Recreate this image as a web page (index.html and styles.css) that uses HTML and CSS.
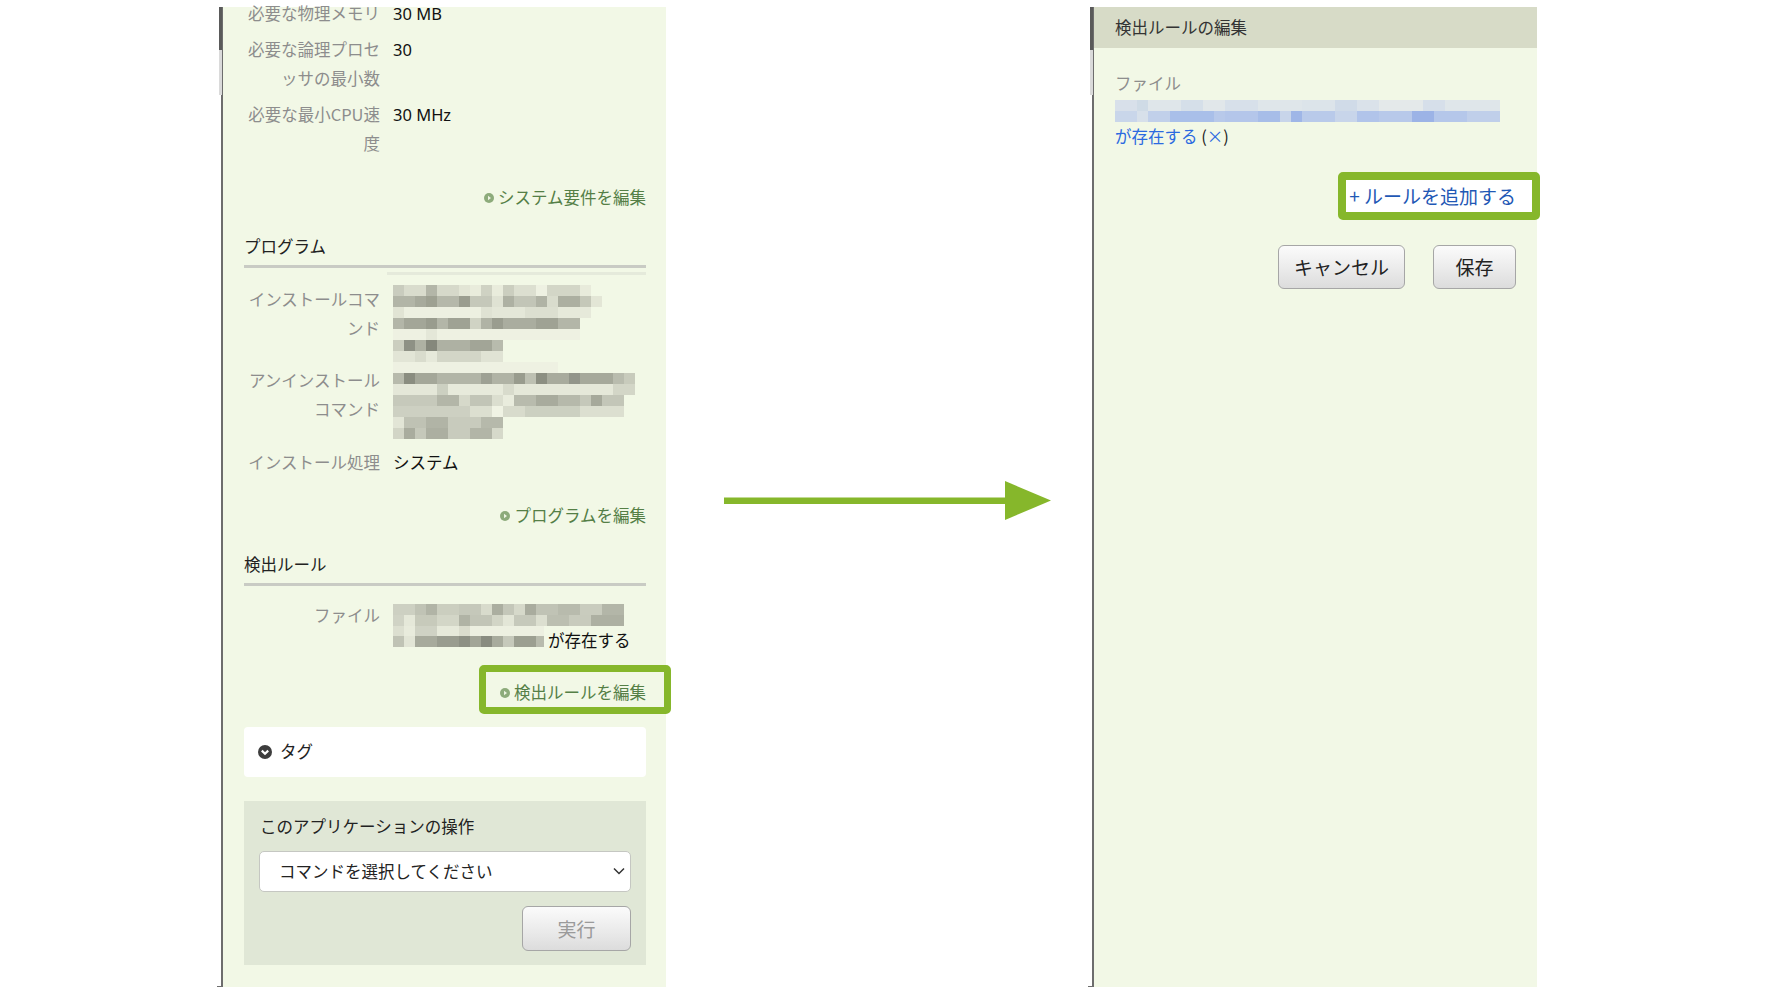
FILE: index.html
```html
<!DOCTYPE html>
<html lang="ja">
<head>
    <meta charset="UTF-8">
    <title>検出ルールの編集</title>
    <link rel="stylesheet" href="styles.css">
</head>
<body>
    <div class="stage">
        <!-- 左: アプリケーション詳細 -->
        <section class="panel">
            <div class="detail-body">
                <dl class="props props-first">
                    <dt>必要な物理メモリ</dt>
                    <dd class="latin">30 MB</dd>
                    <dt>必要な論理プロセッサの最小数</dt>
                    <dd class="latin">30</dd>
                    <dt>必要な最小CPU速度</dt>
                    <dd class="latin">30 MHz</dd>
                </dl>
                <div class="edit-row">
                    <a class="edit-link" href="#"><svg class="go-icon" width="10" height="10" viewBox="0 0 10 10"><circle cx="5" cy="5" r="5" fill="#8dab7b"/><path d="M4 2.8 L7 5 L4 7.2 Z" fill="#eef4e4"/></svg><span>システム要件を編集</span></a>
                </div>

                <h3 class="section-title">プログラム</h3>
                <div class="strip"></div>
                <dl class="props">
                    <dt>インストールコマンド</dt>
                    <dd>
                        <svg class="mosaic mosaic-cmd" width="210" height="77" shape-rendering="crispEdges">
                            <rect x="0" y="0" width="11" height="11" fill="#c9ccbe"/><rect x="11" y="0" width="22" height="11" fill="#d9dccd"/><rect x="33" y="0" width="11" height="11" fill="#b3b6a8"/><rect x="44" y="0" width="22" height="11" fill="#d6d9ca"/><rect x="66" y="0" width="11" height="11" fill="#e2e5d5"/><rect x="77" y="0" width="11" height="11" fill="#e9ecdc"/><rect x="88" y="0" width="11" height="11" fill="#cfd2c3"/><rect x="99" y="0" width="11" height="11" fill="#e9ecdc"/><rect x="110" y="0" width="11" height="11" fill="#cbcebf"/><rect x="121" y="0" width="22" height="11" fill="#dcdfd0"/><rect x="143" y="0" width="11" height="11" fill="#eef1e2"/><rect x="154" y="0" width="33" height="11" fill="#d3d6c7"/><rect x="187" y="0" width="11" height="11" fill="#e8ebdb"/>
                            <rect x="0" y="11" width="22" height="11" fill="#b2b5a7"/><rect x="22" y="11" width="11" height="11" fill="#a7aa9c"/><rect x="33" y="11" width="11" height="11" fill="#9ea192"/><rect x="44" y="11" width="22" height="11" fill="#b5b8aa"/><rect x="66" y="11" width="11" height="11" fill="#9a9d8f"/><rect x="77" y="11" width="22" height="11" fill="#c5c8ba"/><rect x="99" y="11" width="11" height="11" fill="#dfe2d3"/><rect x="110" y="11" width="11" height="11" fill="#aeb1a3"/><rect x="121" y="11" width="22" height="11" fill="#c2c5b7"/><rect x="143" y="11" width="11" height="11" fill="#b0b3a5"/><rect x="154" y="11" width="11" height="11" fill="#d9dccd"/><rect x="165" y="11" width="22" height="11" fill="#acafa1"/><rect x="187" y="11" width="11" height="11" fill="#c5c8b9"/><rect x="198" y="11" width="11" height="11" fill="#e3e6d6"/>
                            <rect x="0" y="22" width="11" height="11" fill="#e1e4d4"/><rect x="11" y="22" width="77" height="11" fill="#edf0e1"/><rect x="88" y="22" width="11" height="11" fill="#dfe2d3"/><rect x="99" y="22" width="33" height="11" fill="#e4e7d8"/><rect x="132" y="22" width="33" height="11" fill="#dcdfd0"/><rect x="165" y="22" width="33" height="11" fill="#e6e9da"/>
                            <rect x="0" y="33" width="11" height="11" fill="#b3b6a8"/><rect x="11" y="33" width="22" height="11" fill="#a3a698"/><rect x="33" y="33" width="11" height="11" fill="#999c8e"/><rect x="44" y="33" width="11" height="11" fill="#b3b6a8"/><rect x="55" y="33" width="22" height="11" fill="#9fa294"/><rect x="77" y="33" width="11" height="11" fill="#d0d3c4"/><rect x="88" y="33" width="11" height="11" fill="#b0b3a5"/><rect x="99" y="33" width="11" height="11" fill="#9a9d8f"/><rect x="110" y="33" width="33" height="11" fill="#aaad9f"/><rect x="143" y="33" width="22" height="11" fill="#9fa294"/><rect x="165" y="33" width="22" height="11" fill="#b3b6a8"/>
                            <rect x="0" y="44" width="187" height="11" fill="#eef1e2"/><rect x="33" y="44" width="11" height="11" fill="#e4e7d8"/>
                            <rect x="0" y="55" width="11" height="11" fill="#cbcebf"/><rect x="11" y="55" width="11" height="11" fill="#8e9185"/><rect x="22" y="55" width="11" height="11" fill="#aeb1a3"/><rect x="33" y="55" width="11" height="11" fill="#85887c"/><rect x="44" y="55" width="33" height="11" fill="#aeb1a3"/><rect x="77" y="55" width="22" height="11" fill="#a2a597"/><rect x="99" y="55" width="11" height="11" fill="#b8bbad"/>
                            <rect x="0" y="66" width="22" height="11" fill="#e2e5d6"/><rect x="22" y="66" width="11" height="11" fill="#d9dccd"/><rect x="33" y="66" width="11" height="11" fill="#e6e9da"/><rect x="44" y="66" width="44" height="11" fill="#d3d6c7"/><rect x="88" y="66" width="22" height="11" fill="#e0e3d4"/>
                        </svg>
                    </dd>
                    <dt>アンインストールコマンド</dt>
                    <dd>
                        <svg class="mosaic mosaic-uninstall" width="242" height="77" shape-rendering="crispEdges">
                            <rect x="0" y="0" width="165" height="11" fill="#eef1e2"/>
                            <rect x="0" y="11" width="11" height="11" fill="#b7baac"/><rect x="11" y="11" width="11" height="11" fill="#8a8d80"/><rect x="22" y="11" width="22" height="11" fill="#a4a799"/><rect x="44" y="11" width="44" height="11" fill="#b2b5a7"/><rect x="88" y="11" width="11" height="11" fill="#9ea194"/><rect x="99" y="11" width="22" height="11" fill="#b0b3a5"/><rect x="121" y="11" width="11" height="11" fill="#999c8e"/><rect x="132" y="11" width="11" height="11" fill="#bdc0b2"/><rect x="143" y="11" width="11" height="11" fill="#8c8f82"/><rect x="154" y="11" width="22" height="11" fill="#a8ab9d"/><rect x="176" y="11" width="11" height="11" fill="#92958a"/><rect x="187" y="11" width="33" height="11" fill="#a6a99b"/><rect x="220" y="11" width="11" height="11" fill="#b9bcae"/><rect x="231" y="11" width="11" height="11" fill="#c8cbbc"/>
                            <rect x="0" y="22" width="44" height="11" fill="#e4e7d8"/><rect x="44" y="22" width="11" height="11" fill="#ccd0c1"/><rect x="55" y="22" width="55" height="11" fill="#e7eadb"/><rect x="110" y="22" width="11" height="11" fill="#d8dbcc"/><rect x="121" y="22" width="99" height="11" fill="#e5e8d9"/><rect x="220" y="22" width="22" height="11" fill="#d3d6c7"/>
                            <rect x="0" y="33" width="44" height="11" fill="#c6c9bb"/><rect x="44" y="33" width="22" height="11" fill="#b3b6a8"/><rect x="66" y="33" width="11" height="11" fill="#d6d9ca"/><rect x="77" y="33" width="22" height="11" fill="#c2c5b7"/><rect x="99" y="33" width="11" height="11" fill="#dbdecf"/><rect x="110" y="33" width="11" height="11" fill="#e9ecdd"/><rect x="121" y="33" width="22" height="11" fill="#b8bbad"/><rect x="143" y="33" width="22" height="11" fill="#a8ab9d"/><rect x="165" y="33" width="22" height="11" fill="#b6b9ab"/><rect x="187" y="33" width="11" height="11" fill="#c5c8ba"/><rect x="198" y="33" width="11" height="11" fill="#a6a99b"/><rect x="209" y="33" width="22" height="11" fill="#c3c6b8"/>
                            <rect x="0" y="44" width="77" height="11" fill="#cdd0c2"/><rect x="77" y="44" width="22" height="11" fill="#dcdfd0"/><rect x="99" y="44" width="11" height="11" fill="#f0f3e4"/><rect x="110" y="44" width="22" height="11" fill="#d8dbcc"/><rect x="132" y="44" width="55" height="11" fill="#ccd0c1"/><rect x="187" y="44" width="44" height="11" fill="#dcdfd0"/>
                            <rect x="0" y="55" width="11" height="11" fill="#e2e5d6"/><rect x="11" y="55" width="22" height="11" fill="#bfc2b4"/><rect x="33" y="55" width="22" height="11" fill="#b1b4a6"/><rect x="55" y="55" width="33" height="11" fill="#c8cbbd"/><rect x="88" y="55" width="22" height="11" fill="#b6b9ab"/>
                            <rect x="0" y="66" width="11" height="11" fill="#d2d5c6"/><rect x="11" y="66" width="11" height="11" fill="#a9ac9e"/><rect x="22" y="66" width="11" height="11" fill="#c5c8ba"/><rect x="33" y="66" width="22" height="11" fill="#acafa1"/><rect x="55" y="66" width="22" height="11" fill="#c8cbbd"/><rect x="77" y="66" width="22" height="11" fill="#b2b5a7"/><rect x="99" y="66" width="11" height="11" fill="#d6d9ca"/>
                        </svg>
                    </dd>
                    <dt>インストール処理</dt>
                    <dd>システム</dd>
                </dl>
                <div class="edit-row">
                    <a class="edit-link" href="#"><svg class="go-icon" width="10" height="10" viewBox="0 0 10 10"><circle cx="5" cy="5" r="5" fill="#8dab7b"/><path d="M4 2.8 L7 5 L4 7.2 Z" fill="#eef4e4"/></svg><span>プログラムを編集</span></a>
                </div>

                <h3 class="section-title">検出ルール</h3>
                <dl class="props">
                    <dt>ファイル</dt>
                    <dd>
                        <svg class="mosaic mosaic-file" width="231" height="22" shape-rendering="crispEdges">
                            <rect x="0" y="0" width="22" height="11" fill="#cdd0c2"/><rect x="22" y="0" width="11" height="11" fill="#c0c3b5"/><rect x="33" y="0" width="11" height="11" fill="#b1b4a6"/><rect x="44" y="0" width="22" height="11" fill="#cbcebf"/><rect x="66" y="0" width="22" height="11" fill="#c5c8ba"/><rect x="88" y="0" width="11" height="11" fill="#d8dbcc"/><rect x="99" y="0" width="11" height="11" fill="#abaea0"/><rect x="110" y="0" width="11" height="11" fill="#c4c7b9"/><rect x="121" y="0" width="11" height="11" fill="#d6d9ca"/><rect x="132" y="0" width="11" height="11" fill="#a9ac9e"/><rect x="143" y="0" width="22" height="11" fill="#c0c3b5"/><rect x="165" y="0" width="22" height="11" fill="#b8bbad"/><rect x="187" y="0" width="22" height="11" fill="#c9ccbe"/><rect x="209" y="0" width="22" height="11" fill="#b3b6a8"/>
                            <rect x="0" y="11" width="11" height="11" fill="#d0d3c5"/><rect x="11" y="11" width="11" height="11" fill="#e5e8d9"/><rect x="22" y="11" width="22" height="11" fill="#c7cabb"/><rect x="44" y="11" width="22" height="11" fill="#d3d6c7"/><rect x="66" y="11" width="11" height="11" fill="#b0b3a5"/><rect x="77" y="11" width="22" height="11" fill="#c2c5b7"/><rect x="99" y="11" width="11" height="11" fill="#d2d5c6"/><rect x="110" y="11" width="11" height="11" fill="#e3e6d7"/><rect x="121" y="11" width="22" height="11" fill="#c6c9bb"/><rect x="143" y="11" width="11" height="11" fill="#dcdfd0"/><rect x="154" y="11" width="22" height="11" fill="#bcbfb1"/><rect x="176" y="11" width="22" height="11" fill="#c8cbbd"/><rect x="198" y="11" width="33" height="11" fill="#adb0a2"/>
                        </svg>
                        <div class="exists-line">
                            <svg class="mosaic" width="151" height="21" shape-rendering="crispEdges">
                                <rect x="0" y="0" width="11" height="10" fill="#dcdfd0"/><rect x="11" y="0" width="11" height="10" fill="#e8ebdc"/><rect x="22" y="0" width="22" height="10" fill="#cfd2c4"/><rect x="44" y="0" width="22" height="10" fill="#e6e9da"/><rect x="66" y="0" width="11" height="10" fill="#dadccd"/><rect x="77" y="0" width="74" height="10" fill="#edf0e1"/>
                                <rect x="0" y="10" width="11" height="11" fill="#c0c3b5"/><rect x="11" y="10" width="11" height="11" fill="#e2e5d6"/><rect x="22" y="10" width="22" height="11" fill="#a7aa9c"/><rect x="44" y="10" width="22" height="11" fill="#999c8f"/><rect x="66" y="10" width="11" height="11" fill="#8d9084"/><rect x="77" y="10" width="11" height="11" fill="#a2a597"/><rect x="88" y="10" width="11" height="11" fill="#898c80"/><rect x="99" y="10" width="11" height="11" fill="#a8ab9d"/><rect x="110" y="10" width="11" height="11" fill="#c6c9bb"/><rect x="121" y="10" width="22" height="11" fill="#9c9f91"/><rect x="143" y="10" width="8" height="11" fill="#b8bbad"/>
                            </svg>
                            <span class="exists-text">が存在する</span>
                        </div>
                    </dd>
                </dl>
                <div class="edit-row edit-row-marked">
                    <a class="edit-link marked" href="#"><svg class="go-icon" width="10" height="10" viewBox="0 0 10 10"><circle cx="5" cy="5" r="5" fill="#8dab7b"/><path d="M4 2.8 L7 5 L4 7.2 Z" fill="#eef4e4"/></svg><span>検出ルールを編集</span></a>
                </div>

                <div class="tag-box">
                    <svg width="14" height="14" viewBox="0 0 14 14"><circle cx="7" cy="7" r="7" fill="#3d3d3d"/><path d="M3.8 5.6 L7 8.8 L10.2 5.6" fill="none" stroke="#fff" stroke-width="2.2"/></svg>
                    <span>タグ</span>
                </div>

                <div class="ops-box">
                    <div class="ops-title">このアプリケーションの操作</div>
                    <div class="select-box">
                        <span>コマンドを選択してください</span>
                        <svg width="12" height="8" viewBox="0 0 12 8"><path d="M1 1.5 L6 6.5 L11 1.5" fill="none" stroke="#333" stroke-width="1.5"/></svg>
                    </div>
                    <div class="ops-actions">
                        <button class="btn btn-disabled">実行</button>
                    </div>
                </div>
            </div>
        </section>

        <div class="arrow">
            <svg width="327" height="40" viewBox="0 0 327 40">
                <rect x="0" y="16.5" width="283" height="6.5" fill="#86b72b"/>
                <polygon points="281,0 327,19.5 281,39" fill="#86b72b"/>
            </svg>
        </div>

        <!-- 右: 検出ルールの編集 -->
        <section class="panel">
            <div class="edit-head">検出ルールの編集</div>
            <div class="edit-body">
                <div class="field-label">ファイル</div>
                <svg class="mosaic mosaic-blue" width="385" height="22" shape-rendering="crispEdges">
                    <rect x="0" y="0" width="22" height="11" fill="#d8e0ea"/><rect x="22" y="0" width="11" height="11" fill="#cfdbe6"/><rect x="33" y="0" width="33" height="11" fill="#dfe6ea"/><rect x="66" y="0" width="22" height="11" fill="#d5dfe9"/><rect x="88" y="0" width="22" height="11" fill="#e1e7ea"/><rect x="110" y="0" width="33" height="11" fill="#d7e0ea"/><rect x="143" y="0" width="44" height="11" fill="#dfe6ea"/><rect x="187" y="0" width="33" height="11" fill="#dce4ea"/><rect x="220" y="0" width="22" height="11" fill="#d0dbe8"/><rect x="242" y="0" width="22" height="11" fill="#dae2ea"/><rect x="264" y="0" width="44" height="11" fill="#e4e9ea"/><rect x="308" y="0" width="22" height="11" fill="#d6dfea"/><rect x="330" y="0" width="55" height="11" fill="#dfe6ea"/>
                    <rect x="0" y="11" width="22" height="11" fill="#c9d6ea"/><rect x="22" y="11" width="11" height="11" fill="#d7e0ea"/><rect x="33" y="11" width="22" height="11" fill="#c1d0ea"/><rect x="55" y="11" width="44" height="11" fill="#a9bfe9"/><rect x="99" y="11" width="11" height="11" fill="#b8c9ea"/><rect x="110" y="11" width="33" height="11" fill="#b4c6ea"/><rect x="143" y="11" width="22" height="11" fill="#a7bde8"/><rect x="165" y="11" width="11" height="11" fill="#c8d5ea"/><rect x="176" y="11" width="11" height="11" fill="#9fb6e7"/><rect x="187" y="11" width="33" height="11" fill="#b9caea"/><rect x="220" y="11" width="22" height="11" fill="#c8d5ea"/><rect x="242" y="11" width="22" height="11" fill="#b1c4ea"/><rect x="264" y="11" width="33" height="11" fill="#b8c9ea"/><rect x="297" y="11" width="22" height="11" fill="#9cb3e6"/><rect x="319" y="11" width="33" height="11" fill="#b5c7ea"/><rect x="352" y="11" width="33" height="11" fill="#c0cfea"/>
                </svg>
                <div class="rule-line"><a class="rule-link" href="#">が存在する</a> (<a class="rule-link" href="#">×</a>)</div>

                <div class="add-row">
                    <a class="add-link" href="#">+ ルールを追加する</a>
                </div>

                <div class="form-actions">
                    <button class="btn">キャンセル</button>
                    <button class="btn btn-save">保存</button>
                </div>
            </div>
        </section>
    </div>
</body>
</html>
```

FILE: styles.css
```css
body {
    margin: 0;
    background-color: #fff;
    font-family: "Noto Sans CJK JP", "Noto Sans", sans-serif;
    font-size: 16.5px;
    line-height: 29px;
    color: #222;
}
.stage {
    display: flex;
    align-items: flex-start;
    padding: 7px 0 0 221px;
}
.panel {
    position: relative;
    box-sizing: border-box;
    width: 445px;
    height: 980px;
    border-left: 2px solid #6d6d6d;
    background-color: #f2f8e6;
}
/* scroll thumb on the left edge */
.panel::before {
    content: "";
    position: absolute;
    left: -4px;
    top: 0;
    width: 3px;
    height: 88px;
    background: linear-gradient(#5a5a5a 0 43px, #dadada 43px);
}
.panel::after {
    content: "";
    position: absolute;
    left: -6px;
    bottom: 0;
    width: 5px;
    height: 1px;
    background-color: #6d6d6d;
}
.detail-body {
    padding: 0 20px 0 21px;
}
.props {
    display: grid;
    grid-template-columns: 136px 1fr;
    column-gap: 13px;
    row-gap: 7px;
    margin: 0;
}
.props-first {
    margin-top: -8.5px;
}
.props dt {
    text-align: right;
    color: #8d8d8d;
}
.props dd {
    margin: 0;
    color: #111;
}
.props dd.latin {
    font-family: "Noto Sans", sans-serif;
}
.mosaic {
    display: block;
}
.mosaic-cmd {
    margin: 0.5px 0 -3px;
}
.mosaic-uninstall {
    margin: -4px 0 1.5px;
}
.mosaic-file {
    margin-top: 3.5px;
}
.exists-line {
    display: flex;
    align-items: flex-start;
}
.exists-text {
    margin-left: 4px;
}
.edit-row {
    margin-top: 23px;
    text-align: right;
}
.props-first + .edit-row {
    margin-top: 24px;
}
.edit-row-marked {
    margin-top: 21.5px;
}
.edit-link {
    display: inline-flex;
    align-items: center;
    gap: 4px;
    color: #557f46;
    text-decoration: none;
}
.edit-link.marked {
    position: relative;
}
.edit-link.marked::after {
    content: "";
    position: absolute;
    left: -21px;
    right: -25px;
    top: -13.5px;
    bottom: -6.5px;
    border: 7px solid #86b72b;
    border-radius: 5px;
}
.section-title {
    margin: 20px 0 15px;
    padding-bottom: 4px;
    border-bottom: 3px solid #c9cbc4;
    font-size: 16.5px;
    font-weight: normal;
    color: #222;
}
.edit-row + .section-title {
    margin-top: 19.5px;
}
.strip {
    height: 3px;
    margin: -11px 0 10px 143px;
    background-color: #e5eadb;
}
.tag-box {
    display: flex;
    align-items: center;
    gap: 8px;
    height: 50px;
    margin-top: 19.5px;
    padding-left: 14px;
    background-color: #fff;
    border-radius: 4px;
}
.ops-box {
    margin-top: 24px;
    padding: 11.5px 15px 14px 16px;
    background-color: #e0e7d6;
}
.ops-title {
    color: #222;
}
.select-box {
    display: flex;
    justify-content: space-between;
    align-items: center;
    box-sizing: border-box;
    height: 41px;
    margin: 9.5px 0 0 -1px;
    padding: 0 5px 0 19px;
    background-color: #fff;
    border: 1px solid #c5c7c2;
    border-radius: 5px;
    color: #222;
}
.ops-actions {
    margin-top: 14px;
    text-align: right;
}
.btn {
    box-sizing: border-box;
    height: 44px;
    padding: 0;
    border: 1px solid #a6a6a6;
    border-radius: 6px;
    background: linear-gradient(#fbfbfb, #e9e9e9 60%, #dcdcdc);
    font-family: "Noto Sans CJK JP", "Noto Sans", sans-serif;
    font-size: 19px;
    color: #222;
    width: 127px;
}
.btn-disabled {
    width: 109px;
    height: 45px;
    color: #9a9a9a;
}
.btn-save {
    width: 83px;
}
.arrow {
    width: 327px;
    height: 40px;
    margin: 474px 41px 0 58px;
}
.arrow svg {
    display: block;
}
.edit-head {
    height: 41px;
    padding-left: 21px;
    line-height: 41px;
    background-color: #d7dbc7;
    color: #333;
}
.edit-body {
    padding: 20.5px 21px 0 21px;
}
.field-label {
    color: #8d8d8d;
}
.mosaic-blue {
    margin-top: 2.5px;
}
.rule-line {
    color: #222;
}
.rule-link {
    color: #2b6ae0;
    text-decoration: none;
}
.add-row {
    margin-top: 30px;
    text-align: right;
}
.add-link {
    position: relative;
    z-index: 0;
    display: inline-block;
    font-size: 19px;
    color: #1f58b5;
    text-decoration: none;
}
.add-link::before {
    content: "";
    position: absolute;
    z-index: -1;
    left: -11px;
    right: -24px;
    top: -9.5px;
    bottom: -9.5px;
    border: 8px solid #86b72b;
    border-radius: 5px;
    background-color: #fff;
}
.form-actions {
    display: flex;
    justify-content: flex-end;
    gap: 28px;
    margin-top: 32.5px;
}
```
